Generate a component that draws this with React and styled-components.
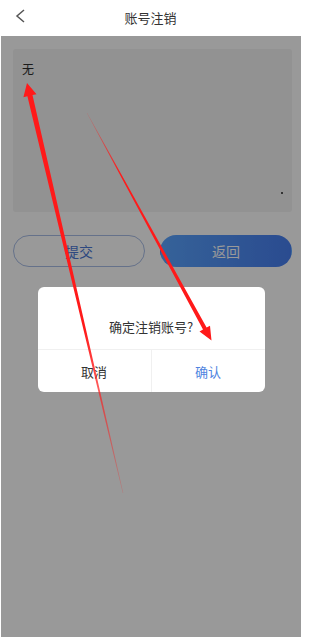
import React from 'react'
import styled, { createGlobalStyle } from 'styled-components'

const Globalstyle = createGlobalStyle`
  html, body { margin: 0; padding: 0; background: #fff; }
  body { font-family: "Noto Sans CJK SC", "Noto Sans", sans-serif; }
  * { box-sizing: border-box; }
`

const Page = styled.div`
  position: relative;
  width: 301px;
  height: 637px;
  display: flex;
  flex-direction: column;
  overflow: hidden;
  background: #fff;
`

const Header = styled.header`
  height: 36px;
  flex-shrink: 0;
  display: flex;
  align-items: center;
  justify-content: center;
  position: relative;
  background: #fff;
`

const BackBtn = styled.span`
  position: absolute;
  left: 14px;
  top: 8px;
  width: 14px;
  height: 18px;
  display: flex;
`

const Title = styled.h1`
  margin: 0;
  font-size: 13px;
  font-weight: 400;
  color: #333;
  line-height: 36px;
`

const Body = styled.main`
  position: relative;
  flex: 1;
  background: #fff;
`

const Content = styled.div`
  padding: 13px 9px 0 13px;
  display: flex;
  flex-direction: column;
  gap: 23px;
`

const TextBox = styled.div`
  position: relative;
  height: 163px;
  background: #f3f3f3;
  border-radius: 3px;
  padding: 11px 9px;
  font-size: 12px;
  line-height: 17px;
  color: #2e2e2e;

  &::after {
    content: '';
    position: absolute;
    right: 9px;
    bottom: 18px;
    width: 2px;
    height: 2px;
    background: #555;
  }
`

const ButtonRow = styled.div`
  display: flex;
  gap: 15px;
`

const Button = styled.button`
  flex: 1;
  height: 32px;
  border-radius: 16px;
  font-family: inherit;
  font-size: 14px;
  padding: 0;
  border: 1px solid ${p => (p.$primary ? 'transparent' : '#a9bde6')};
  color: ${p => (p.$primary ? '#fff' : '#4c78d6')};
  background: ${p => (p.$primary ? 'linear-gradient(90deg, #5aa4ff, #477ef0)' : '#fff')};
`

const Mask = styled.div`
  position: absolute;
  top: 0;
  right: 0;
  bottom: 0;
  left: 1px;
  background: rgba(0, 0, 0, 0.4);
  display: flex;
  align-items: center;
  justify-content: center;
  padding-top: 6px;
`

const Dialog = styled.div`
  width: 227px;
  background: #fff;
  border-radius: 6px;
  overflow: hidden;
`

const DialogText = styled.p`
  margin: 0;
  height: 62px;
  display: flex;
  align-items: center;
  justify-content: center;
  padding-top: 17px;
  font-size: 13px;
  color: #333;
`

const DialogActions = styled.div`
  display: flex;
  border-top: 1px solid #f0f0f0;
`

const Action = styled.div`
  flex: 1;
  height: 42px;
  display: flex;
  align-items: center;
  justify-content: center;
  font-size: 13px;
  color: ${p => (p.$confirm ? '#4f84e0' : '#333')};
  & + & { border-left: 1px solid #f0f0f0; }
`

const Marks = styled.svg`
  position: absolute;
  left: 0;
  top: 0;
  width: 301px;
  height: 637px;
  pointer-events: none;
`

function Prac() {
  return (
    <>
      <Globalstyle />
      <Page>
        <Header>
          <BackBtn>
            <svg width="14" height="18" viewBox="0 0 14 18">
              <polyline points="10,2 3,8 10,14" fill="none" stroke="#555" strokeWidth="1.5" />
            </svg>
          </BackBtn>
          <Title>账号注销</Title>
        </Header>
        <Body>
          <Content>
            <TextBox>无</TextBox>
            <ButtonRow>
              <Button>提交</Button>
              <Button $primary>返回</Button>
            </ButtonRow>
          </Content>
          <Mask>
            <Dialog>
              <DialogText>确定注销账号?</DialogText>
              <DialogActions>
                <Action>取消</Action>
                <Action $confirm>确认</Action>
              </DialogActions>
            </Dialog>
          </Mask>
        </Body>
        <Marks viewBox="0 0 301 637">
          <defs>
            <linearGradient id="fadeA" gradientUnits="userSpaceOnUse" x1="123" y1="493" x2="85" y2="330">
              <stop offset="0" stopColor="#ff1a1a" stopOpacity="0.2" />
              <stop offset="1" stopColor="#ff1a1a" stopOpacity="1" />
            </linearGradient>
            <linearGradient id="fadeB" gradientUnits="userSpaceOnUse" x1="87" y1="113" x2="120" y2="175">
              <stop offset="0" stopColor="#ff1a1a" stopOpacity="0.2" />
              <stop offset="1" stopColor="#ff1a1a" stopOpacity="1" />
            </linearGradient>
          </defs>
          <polygon
            fill="url(#fadeA)"
            points="27,83 36.5,94.2 32.5,95.1 123.3,492.9 122.7,493.1 27.4,96.3 23.4,97.2"
          />
          <polygon
            fill="url(#fadeB)"
            points="211.5,340.5 210,325.7 206.6,327.6 87.2,112.9 86.8,113.1 203,329.6 199.5,331.5"
          />
        </Marks>
      </Page>
    </>
  )
}

export default Prac
